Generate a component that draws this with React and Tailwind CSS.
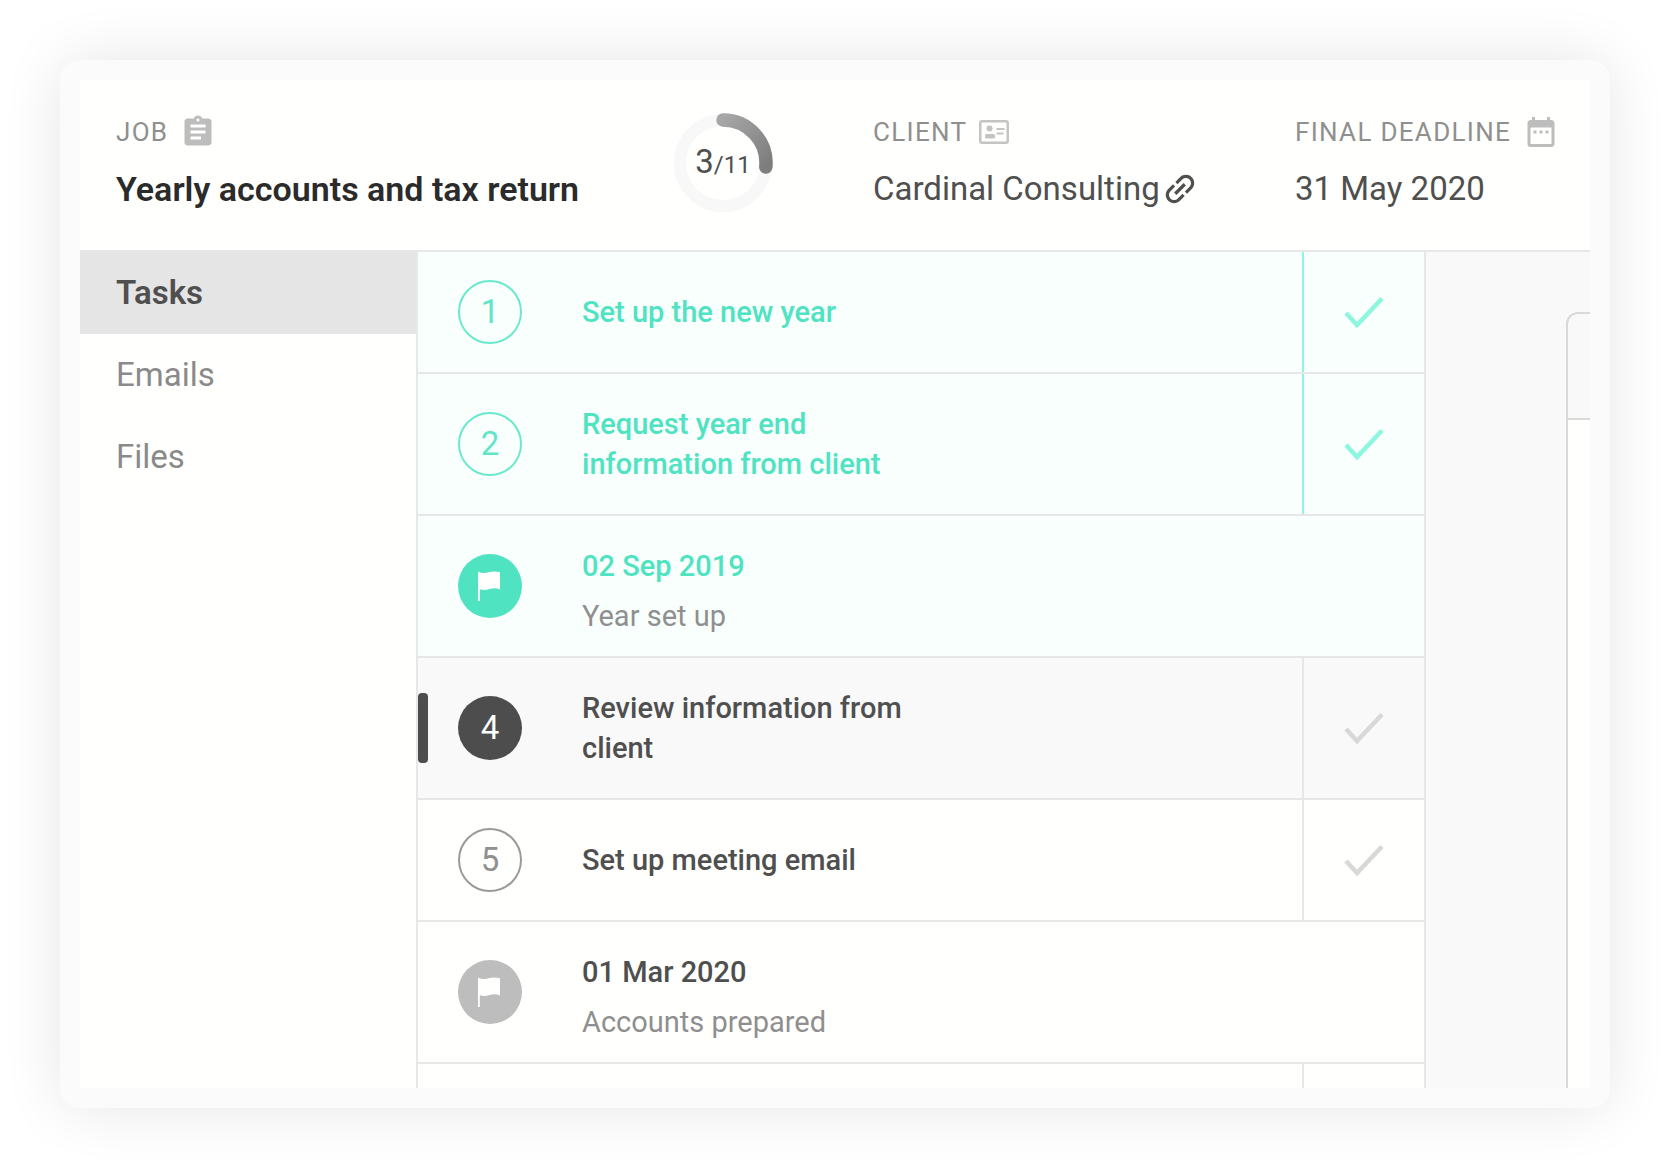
import React, { useState } from "react";
import clsx from "clsx";
import { MdAssignment, MdDateRange, MdLink } from "react-icons/md";

const sections = ["Tasks", "Emails", "Files"];

const initialTasks = [
  { id: 1, title: "Set up the new year", status: "done" },
  { id: 2, title: "Request year end information from client", status: "done" },
  { id: 3, date: "02 Sep 2019", title: "Year set up", status: "done", milestone: true },
  { id: 4, title: "Review information from client", status: "active" },
  { id: 5, title: "Set up meeting email", status: "todo" },
  { id: 6, date: "01 Mar 2020", title: "Accounts prepared", status: "todo", milestone: true },
];

const ContactCardIcon = () => (
  <svg width="30" height="24" viewBox="0 0 30 24" fill="none" className="text-[#c4c4c4]" aria-hidden="true">
    <rect x="1.25" y="1.25" width="27.5" height="21.5" rx="2" stroke="currentColor" strokeWidth="2.5" />
    <circle cx="10.5" cy="8.5" r="3" fill="currentColor" />
    <rect x="6" y="14" width="10" height="4.5" rx="1.5" fill="currentColor" />
    <path d="M17.5 9h8M17.5 13.5h7" stroke="currentColor" strokeWidth="2" />
  </svg>
);

const CheckIcon = () => (
  <svg width="40" height="32" viewBox="0 0 40 32" fill="none" stroke="currentColor" strokeWidth="4.5" aria-hidden="true">
    <path d="M2 17 13 29 38 2.5" />
  </svg>
);

const FlagIcon = () => (
  <svg width="24" height="30" viewBox="0 0 24 30" fill="currentColor" aria-hidden="true">
    <path d="M0 .5c4 2.200 8 1.600 11.500.6C15 .1 18.500.3 22 1.300V18.500c-3.500-1.600-7-1.400-10.500-.4C8 19.100 5 19.300 1.800 18.300V30H0z" />
  </svg>
);

const Progress = ({ done, total }) => (
  <div className="relative flex size-25 items-center justify-center">
    <svg className="absolute inset-0" viewBox="0 0 100 100" fill="none" aria-hidden="true">
      <defs>
        <linearGradient id="arc" x1="0" y1="0" x2="1" y2="1">
          <stop offset="0" stopColor="#a6a6a6" />
          <stop offset="1" stopColor="#7d7d7d" />
        </linearGradient>
      </defs>
      <circle cx="50" cy="51" r="43" stroke="#f8f8f8" strokeWidth="12" />
      <path d="M50 8A43 43 0 0 1 92.800 55" stroke="url(#arc)" strokeWidth="13.5" strokeLinecap="round" />
    </svg>
    <span className="relative text-[33px] leading-10 text-[#4f4f4f]">
      {done}
      <span className="text-2xl">/{total}</span>
    </span>
  </div>
);

const HeaderField = ({ label, icon, children }) => (
  <div className="flex flex-col gap-4">
    <div className="flex h-10 items-center gap-3 text-[26px] tracking-wider whitespace-nowrap text-[#8f8f8f] uppercase">
      {label}
      {icon}
    </div>
    {children}
  </div>
);

const TaskRow = ({ task, onToggle }) => {
  const done = task.status === "done";
  const active = task.status === "active";

  return (
    <li
      className={clsx(
        "relative flex border-b-2 border-[#e7e7e7]",
        done && "bg-[#f9fffd]",
        active && "bg-[#f9f9f9]"
      )}
    >
      {active && <span className="absolute top-1/2 left-0 h-[70px] w-2.5 -translate-y-1/2 rounded bg-[#4d4d4d]" />}

      <div className="flex min-h-30 flex-1 items-center gap-15 py-5 pl-10">
        <span
          className={clsx(
            "flex size-16 shrink-0 items-center justify-center rounded-full text-[33px]",
            task.milestone && "text-[#fffffd]",
            task.milestone && (done ? "bg-[#50e3c2]" : "bg-[#bdbdbd]"),
            !task.milestone && done && "border-2 border-[#6be8cd] text-[#5fe6c8]",
            !task.milestone && active && "bg-[#4d4d4d] text-[#fffffd]",
            !task.milestone && task.status === "todo" && "border-2 border-[#9a9a9a] text-[#8f8f8f]"
          )}
        >
          {task.milestone ? <FlagIcon /> : task.id}
        </span>

        {task.milestone ? (
          <div className="flex flex-col gap-2.5 pt-2.5 text-[29px] leading-10">
            <time className={clsx("font-medium", done ? "text-[#50e3c2]" : "text-[#4f4f4f]")}>{task.date}</time>
            <span className="text-[#8f8f8f]">{task.title}</span>
          </div>
        ) : (
          <div className="py-2.5">
            <p className={clsx("max-w-[340px] text-[29px] leading-10 font-medium", done ? "text-[#50e3c2]" : "text-[#4f4f4f]")}>
              {task.title}
            </p>
          </div>
        )}
      </div>

      {!task.milestone && (
        <button
          type="button"
          aria-label={`Complete ${task.title}`}
          aria-pressed={done}
          onClick={() => onToggle(task.id)}
          className={clsx(
            "flex w-[122px] shrink-0 items-center justify-center border-l-2",
            done ? "border-[#8cf7de] text-[#8cf7de]" : "border-[#e7e7e7] text-[#d8d8d8]"
          )}
        >
          <CheckIcon />
        </button>
      )}
    </li>
  );
};

const App = () => {
  const [section, setSection] = useState("Tasks");
  const [tasks, setTasks] = useState(initialTasks);

  const toggleTask = (id) => {
    setTasks(tasks.map((t) => (t.id === id ? { ...t, status: t.status === "done" ? "todo" : "done" } : t)));
  };

  return (
    <div className="bg-white p-15 font-['Roboto',sans-serif]">
      <div className="rounded-[20px] bg-[#fbfbfc] p-5 shadow-[0_0_60px_rgba(0,0,0,0.1)]">
        <div className="overflow-hidden bg-[#fffffd]">
          <header className="grid grid-cols-[1fr_200px_422px_259px] border-b-2 border-[#e7e7e7] px-9 pt-8 pb-[38px]">
            <HeaderField label="Job" icon={<MdAssignment className="size-9 text-[#bdbdbd]" />}>
              <h1 className="text-[34px] leading-[42px] font-semibold text-[#2b2b2b]">Yearly accounts and tax return</h1>
            </HeaderField>
            <Progress done={3} total={11} />
            <HeaderField label="Client" icon={<ContactCardIcon />}>
              <a href="#client" className="flex items-center text-[33px] leading-[42px] text-[#4f4f4f]">
                Cardinal Consulting
                <MdLink className="size-10 -rotate-45" />
              </a>
            </HeaderField>
            <HeaderField label="Final deadline" icon={<MdDateRange className="size-9 shrink-0 text-[#bdbdbd]" />}>
              <time className="text-[33px] leading-[42px] text-[#4f4f4f]">31 May 2020</time>
            </HeaderField>
          </header>

          <div className="flex">
            <nav className="flex w-[338px] shrink-0 flex-col border-r-2 border-[#e7e7e7]">
              {sections.map((name) => (
                <button
                  key={name}
                  type="button"
                  onClick={() => setSection(name)}
                  className={clsx(
                    "h-[82px] px-9 text-left text-[33px]",
                    section === name ? "bg-[#e5e5e5] font-semibold text-[#4f4f4f]" : "text-[#8a8a8a]"
                  )}
                >
                  {name}
                </button>
              ))}
            </nav>

            <main className="flex-1 border-r-2 border-[#e7e7e7]">
              <ol>
                {tasks.map((task) => (
                  <TaskRow key={task.id} task={task} onToggle={toggleTask} />
                ))}
              </ol>
              {/* top edge of the next row */}
              <div className="flex h-6 justify-end">
                <div className="w-[122px] border-l-2 border-[#e7e7e7]" />
              </div>
            </main>

            <aside className="flex w-[164px] shrink-0 flex-col bg-[#f9f9f9] pt-15 pl-[140px]">
              <div className="flex flex-1 flex-col rounded-tl-[12px] border-t-2 border-l-2 border-[#d9d9d9]">
                <div className="h-[106px] border-b-2 border-[#d9d9d9]" />
                <div className="flex-1 bg-[#fffffd]" />
              </div>
            </aside>
          </div>
        </div>
      </div>
    </div>
  );
};

export default App;
